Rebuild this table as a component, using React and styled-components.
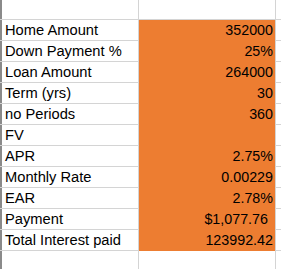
import React from 'react';
import styled, { createGlobalStyle } from 'styled-components';

// Styles

const GlobalStyle = createGlobalStyle`
  html, body {
    margin: 0;
    padding: 0;
    background: #ffffff;
  }
`;

const Sheet = styled.div`
  width: 281px;
  height: 269px;
  overflow: hidden;
  background: #ffffff;
  font-family: "Liberation Sans", Arial, sans-serif;
  color: #000000;
`;

const Row = styled.div`
  display: flex;
  height: ${({ tall }) => (tall ? '19px' : '20px')};
  border-bottom: 1px solid #d4d4d4;
`;

const Edge = styled.div`
  width: 2px;
  flex: none;
  background: #8a8a8a;
`;

const Label = styled.div`
  width: 133px;
  flex: none;
  display: flex;
  align-items: flex-end;
  padding: 0 0 2px 3px;
  border-right: 1px solid #d4d4d4;
  font-size: 14.7px;
  white-space: nowrap;
`;

const Value = styled.div`
  width: ${({ pad }) => 136 - pad}px;
  flex: none;
  display: flex;
  align-items: flex-end;
  justify-content: flex-end;
  padding: 0 ${({ pad }) => pad}px 2px 0;
  margin-bottom: ${({ filled }) => (filled ? '-1px' : '0')};
  padding-bottom: ${({ filled }) => (filled ? '3px' : '2px')};
  background: ${({ filled }) => (filled ? '#ed7d31' : 'transparent')};
  border-right: 1px solid #d4d4d4;
  font-size: 14.3px;
  white-space: nowrap;
`;

// Data

const rows = [
  ['Home Amount', '352000'],
  ['Down Payment %', '25%'],
  ['Loan Amount', '264000'],
  ['Term (yrs)', '30'],
  ['no Periods', '360'],
  ['FV', ''],
  ['APR', '2.75%'],
  ['Monthly Rate', '0.00229'],
  ['EAR', '2.78%'],
  ['Payment', '$1,077.76', 7],
  ['Total Interest paid', '123992.42'],
];

// Component

const App = () => (
  <>
    <GlobalStyle />
    <Sheet>
      <Row tall>
        <Edge />
        <Label />
        <Value pad={2} />
      </Row>
      {rows.map(([label, value, pad]) => (
        <Row key={label}>
          <Edge />
          <Label>{label}</Label>
          <Value filled pad={pad || 2}>{value}</Value>
        </Row>
      ))}
      <Row>
        <Edge />
        <Label />
        <Value pad={2} />
      </Row>
    </Sheet>
  </>
);

export default App;
